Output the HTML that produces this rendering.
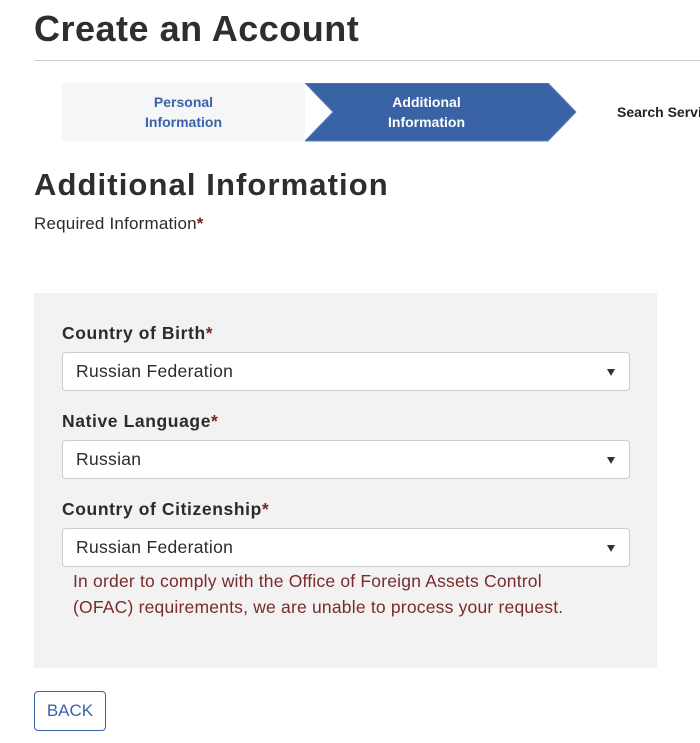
<!DOCTYPE html>
<html><head><style>
body{margin:0;width:700px;height:743px;overflow:hidden;background:#fff;font-family:"Liberation Sans",sans-serif;color:#2b2b2b;position:relative}
.a{position:absolute}
h1{position:absolute;left:34px;top:8px;margin:0;font-size:36px;font-weight:bold;letter-spacing:0.5px;color:#2e2e2e}
.hr{left:34px;top:60px;width:666px;height:1px;background:#ccc}
.s1{left:62px;top:83px;width:243px;height:58px;background:#f5f6f8}
.st{font-size:14px;font-weight:bold;text-align:center;line-height:20px}
h2{position:absolute;left:34px;top:167px;margin:0;font-size:31px;font-weight:bold;letter-spacing:1.1px;color:#2e2e2e}
.req{left:34px;top:214px;font-size:17px;letter-spacing:0.2px}
.r{color:#7a2323;font-weight:bold}
.panel{left:34px;top:293px;width:623px;height:375px;background:#f2f2f2}
.lab{left:62px;font-size:17.5px;font-weight:bold;letter-spacing:0.6px}
.sel{left:62px;width:566px;height:37px;background:#fff;border:1px solid #ccc;border-radius:4px;font-size:17.5px;line-height:37px;text-indent:13px;letter-spacing:0.3px}
.sel:after{content:"";position:absolute;right:14px;top:16px;border-left:4px solid transparent;border-right:4px solid transparent;border-top:7px solid #333}
.err{left:73px;top:568px;font-size:17.5px;line-height:26px;color:#7a2a2a;letter-spacing:0.2px;white-space:nowrap}
.btn{left:34px;top:691px;width:70px;height:38px;border:1px solid #3a63a6;border-radius:4px;color:#3a63a6;font-size:17px;line-height:38px;text-align:center}
</style></head><body>
<h1>Create an Account</h1>
<div class="a hr"></div>
<div class="a s1"></div>
<svg class="a" style="left:305px;top:83px" width="275" height="59"><polygon points="0,0 243,0 271,29 243,58 0,58 28,29" fill="#3a63a6" stroke="#5b80c0" stroke-width="1"/></svg>
<div class="a st" style="left:62px;top:92px;width:243px;color:#3a63a6">Personal<br>Information</div>
<div class="a st" style="left:305px;top:92px;width:243px;color:#fff">Additional<br>Information</div>
<div class="a st" style="left:617px;top:102px;white-space:nowrap;color:#222">Search Services</div>
<h2>Additional Information</h2>
<div class="a req">Required Information<span class="r">*</span></div>
<div class="a panel"></div>
<div class="a lab" style="top:323px">Country of Birth<span class="r">*</span></div>
<div class="a sel" style="top:352px">Russian Federation</div>
<div class="a lab" style="top:411px">Native Language<span class="r">*</span></div>
<div class="a sel" style="top:440px">Russian</div>
<div class="a lab" style="top:499px">Country of Citizenship<span class="r">*</span></div>
<div class="a sel" style="top:528px">Russian Federation</div>
<div class="a err">In order to comply with the Office of Foreign Assets Control<br>(OFAC) requirements, we are unable to process your request.</div>
<div class="a btn">BACK</div>
</body></html>
